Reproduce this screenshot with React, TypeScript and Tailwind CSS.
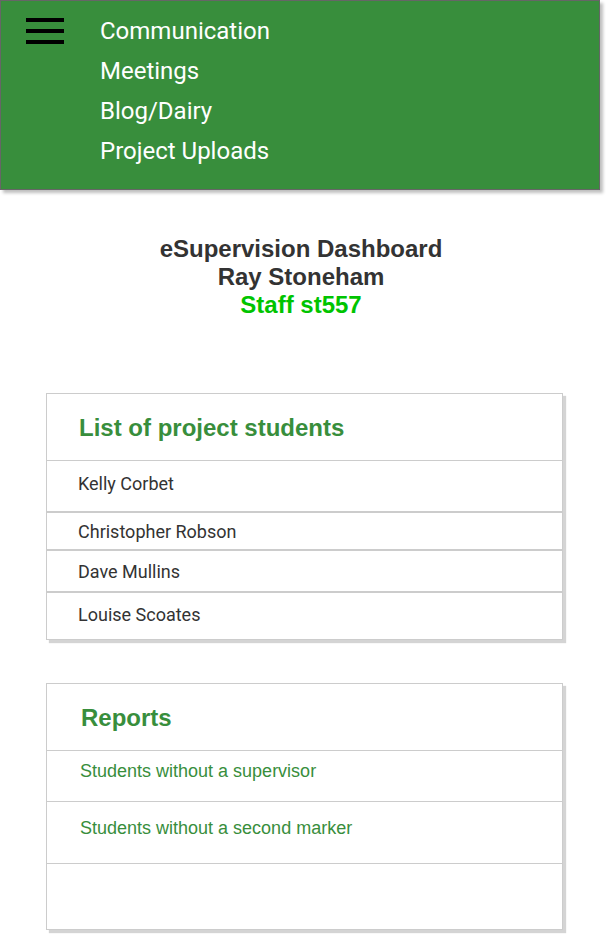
import React from 'react';

const navLinks = ['Communication', 'Meetings', 'Blog/Dairy', 'Project Uploads'];

const students = [
  { name: 'Kelly Corbet', cls: 'h-[51px] pt-[13px] border-t border-[#ccc]' },
  { name: 'Christopher Robson', cls: 'h-[38px] pt-[9px] border-t-2 border-[#ccc]' },
  { name: 'Dave Mullins', cls: 'h-[42px] pt-[11px] border-t-2 border-[#ccc]' },
  { name: 'Louise Scoates', cls: 'h-[48px] pt-[12px] border-t-2 border-[#ccc]' },
];

const reports = [
  { label: 'Students without a supervisor', cls: 'h-[51px] pt-[10px]' },
  { label: 'Students without a second marker', cls: 'h-[62px] pt-[16px]' },
];

const App: React.FC = () => {
  return (
    <div className="w-[610px] min-h-[934px] bg-white overflow-hidden">
      {/* Header / nav */}
      <header className="w-[600px] h-[190px] bg-[#388e3c] border border-[#666] shadow-[3px_3px_3px_rgba(0,0,0,0.25)] flex">
        <div className="w-[99px] pl-[25px] pt-[17px] flex flex-col gap-[7px]">
          <span className="block w-[38px] h-[4px] bg-black" />
          <span className="block w-[38px] h-[4px] bg-black" />
          <span className="block w-[38px] h-[4px] bg-black" />
        </div>
        <ul className="pt-[10px] font-['Roboto',sans-serif] text-white text-[24px] leading-[40px]">
          {navLinks.map(link => (
            <li key={link}>{link}</li>
          ))}
        </ul>
      </header>

      {/* Title */}
      <div className="w-[602px] mt-[45px] text-center font-['Liberation_Sans',Arial,sans-serif] font-bold text-[24px] leading-[28px] text-[#333]">
        <div>eSupervision Dashboard</div>
        <div>Ray Stoneham</div>
        <div className="text-[#00c400]">Staff st557</div>
      </div>

      {/* Students card */}
      <section className="ml-[46px] mt-[74px] w-[517px] border border-[#ccc] bg-white shadow-[3px_3px_1px_#d4d4d4]">
        <h2 className="h-[66px] pl-[32px] pt-[20px] font-['Liberation_Sans',Arial,sans-serif] font-bold text-[24px] leading-[28px] text-[#388e3c]">
          List of project students
        </h2>
        {students.map(s => (
          <div key={s.name} className={`${s.cls} pl-[31px] font-['Roboto',sans-serif] text-[18px] leading-[20px] text-[#333]`}>
            {s.name}
          </div>
        ))}
      </section>

      {/* Reports card */}
      <section className="ml-[46px] mt-[43px] w-[517px] h-[247px] border border-[#ccc] bg-white shadow-[3px_3px_1px_#d4d4d4]">
        <h2 className="h-[66px] pl-[34px] pt-[20px] font-['Liberation_Sans',Arial,sans-serif] font-bold text-[24px] leading-[28px] text-[#388e3c]">
          Reports
        </h2>
        {reports.map(r => (
          <div key={r.label} className={`${r.cls} border-t border-[#ccc] pl-[33px] font-['Liberation_Sans',Arial,sans-serif] text-[18px] leading-[20px] text-[#388e3c]`}>
            {r.label}
          </div>
        ))}
        <div className="border-t border-[#ccc]" />
      </section>
    </div>
  );
};

export default App;
